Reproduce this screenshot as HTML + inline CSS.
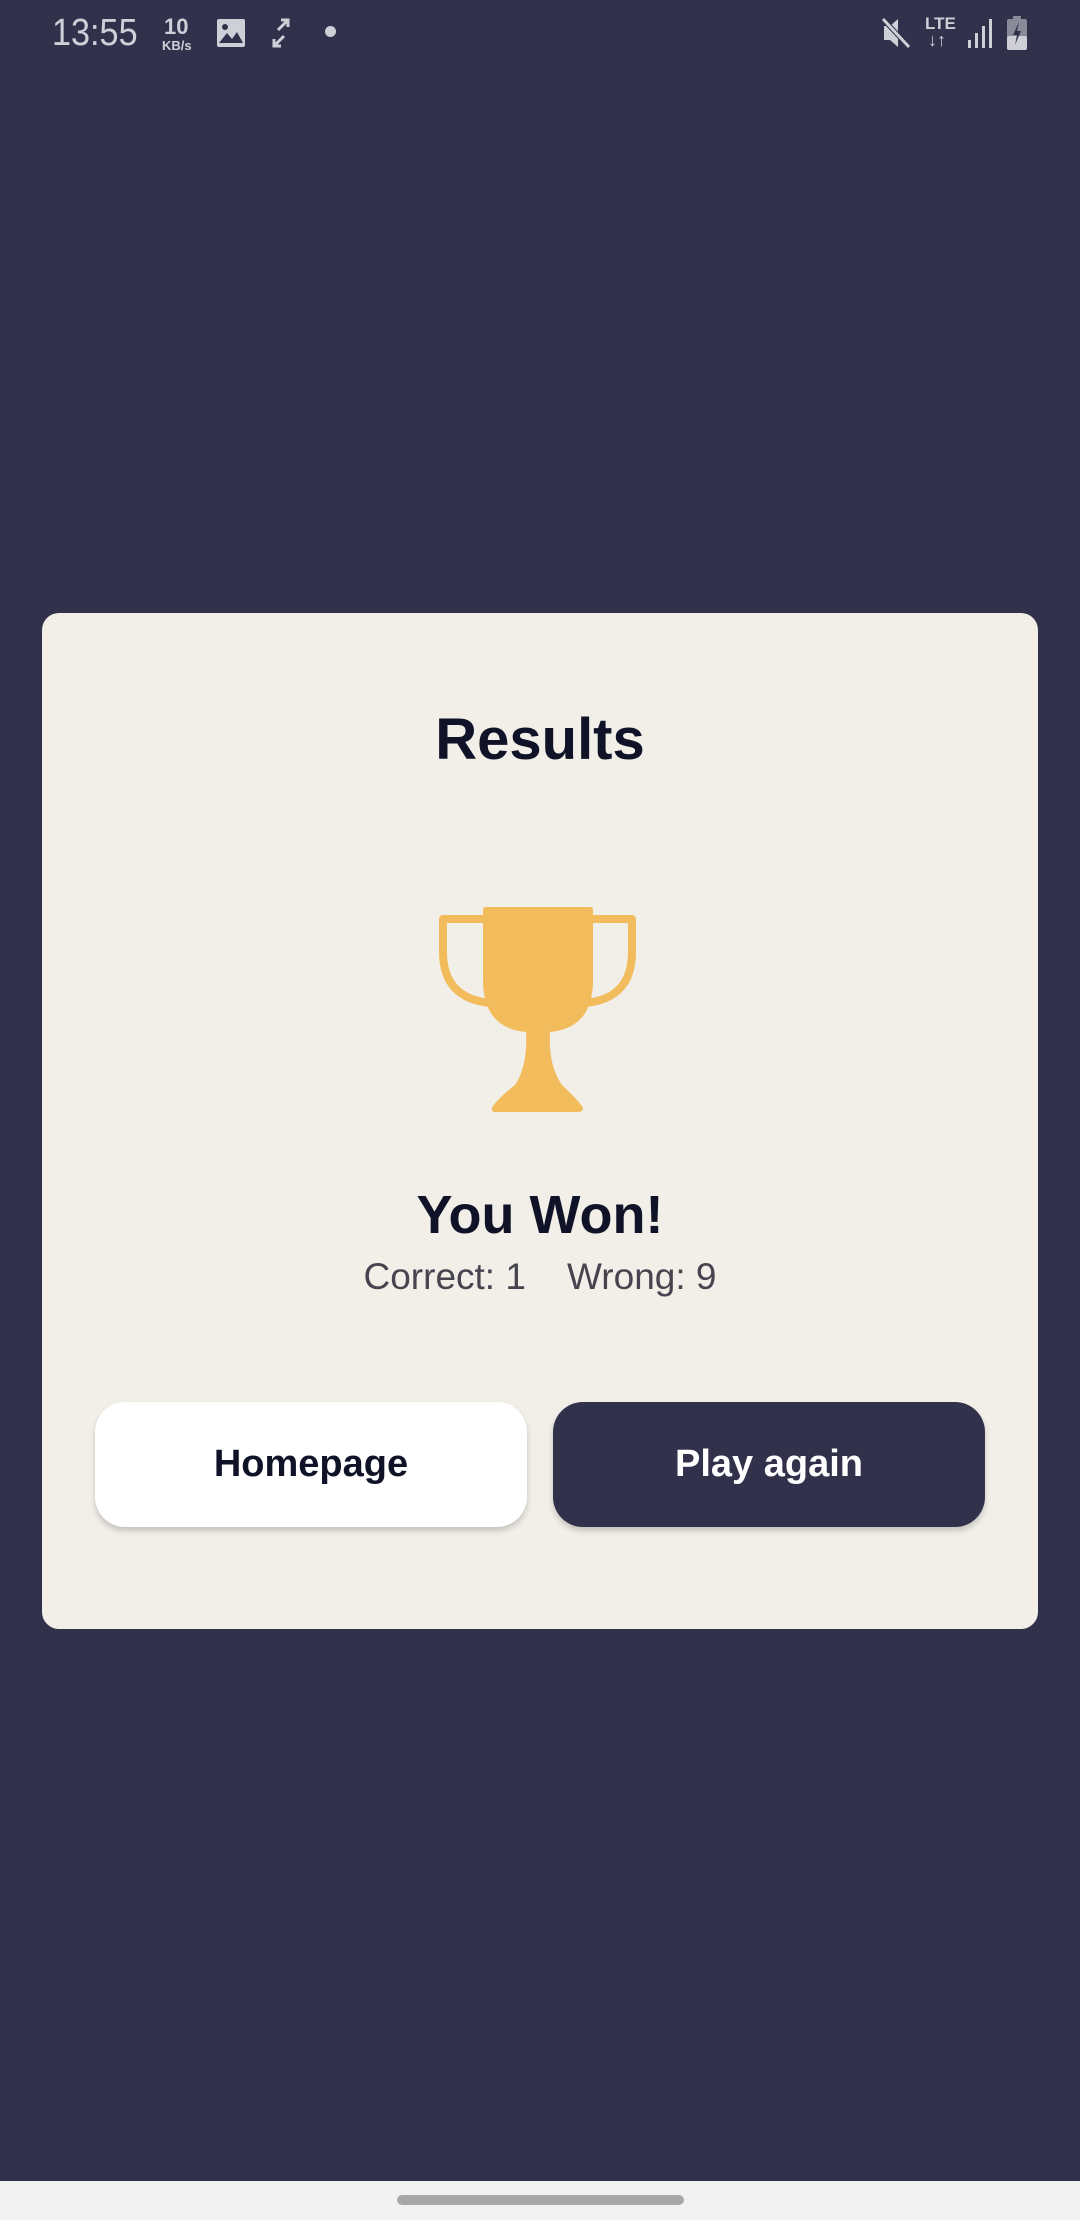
<!DOCTYPE html>
<html><head><meta charset="utf-8"><style>
*{margin:0;padding:0;box-sizing:border-box}
body{width:1080px;height:2220px;background:#32314c;position:relative;overflow:hidden;font-family:"Liberation Sans",sans-serif}
.sb{position:absolute;color:#cfcfd8}
.card{position:absolute;left:42px;top:613px;width:996px;height:1016px;background:#f2efe9;border-radius:17px}
.t{position:absolute;left:0;width:1080px;text-align:center;color:#101328;font-weight:bold}
.btn{position:absolute;top:1402px;height:125px;width:432px;border-radius:30px;display:flex;align-items:center;justify-content:center;font-weight:bold;font-size:38px;box-shadow:0 4px 6px rgba(0,0,0,.18)}
</style></head><body>
<div class="sb" style="left:52px;top:12px;font-size:38px;transform:scaleX(.9);transform-origin:left">13:55</div>
<div class="sb" style="left:164px;top:14px;font-size:22px;font-weight:bold">10</div>
<div class="sb" style="left:162px;top:38px;font-size:13px;font-weight:bold">KB/s</div>
<svg class="sb" style="left:216px;top:18px" width="30" height="30" viewBox="0 0 30 30"><rect x="1" y="1" width="28" height="28" rx="2" fill="#cfcfd8"/><circle cx="9" cy="9" r="3" fill="#32314c"/><path d="M3 25 L11 15 L16 21 L21 14 L27 25Z" fill="#32314c"/></svg>
<svg class="sb" style="left:272px;top:18px" width="18" height="30" viewBox="0 0 18 30"><path d="M9 2 L16 2 L16 9 M16 2 L6 12 M9 28 L2 28 L2 21 M2 28 L12 18" stroke="#cfcfd8" stroke-width="3" fill="none"/></svg>
<div class="sb" style="left:325px;top:26px;width:11px;height:11px;border-radius:50%;background:#cfcfd8"></div>
<svg class="sb" style="left:880px;top:16px" width="32" height="34" viewBox="0 0 32 34"><path d="M4 10 H10 L18 3 V31 L10 24 H4Z" fill="#cfcfd8"/><path d="M3 3 L29 31" stroke="#32314c" stroke-width="5"/><path d="M3 3 L29 31" stroke="#cfcfd8" stroke-width="3"/></svg>
<div class="sb" style="left:925px;top:14px;font-size:17px;font-weight:bold">LTE</div>
<div class="sb" style="left:928px;top:30px;font-size:18px;font-weight:bold">↓↑</div>
<svg class="sb" style="left:966px;top:18px" width="28" height="30" viewBox="0 0 28 30"><rect x="2" y="22" width="3" height="8" fill="#cfcfd8"/><rect x="9" y="15" width="3" height="15" fill="#cfcfd8"/><rect x="16" y="8" width="3" height="22" fill="#cfcfd8"/><rect x="23" y="1" width="3" height="29" fill="#cfcfd8"/></svg>
<svg class="sb" style="left:1006px;top:16px" width="22" height="34" viewBox="0 0 22 34"><rect x="7" y="0" width="8" height="4" fill="#8a8a99"/><rect x="1" y="3" width="20" height="31" rx="2" fill="#8a8a99"/><rect x="1" y="20" width="20" height="14" rx="2" fill="#cfcfd8"/><path d="M13 6 L7 19 H11 L9 29 L15 15 H11Z" fill="#32314c"/></svg>
<div class="card"></div>
<div class="t" style="top:706px;font-size:58px">Results</div>
<svg style="position:absolute;left:420px;top:880px" width="240" height="250" viewBox="0 0 240 250">
<path d="M63,30 Q63,27 66,27 L170,27 Q173,27 173,30 L173,100 Q173,148 130,152 Q128,185 142,205 Q160,222 163,228 Q163,232 158,232 L76,232 Q71,232 72,228 Q76,220 95,205 Q108,185 106,152 Q63,148 63,100 Z" fill="#f2bb5c"/>
<path d="M66,39 L23,39 L23,72 Q23,118 70,123 M170,39 L212,39 L212,72 Q212,118 166,123" stroke="#f2bb5c" stroke-width="8" fill="none" stroke-linejoin="round"/>
</svg>
<div class="t" style="top:1184px;font-size:54px">You Won!</div>
<div class="t" style="top:1256px;font-size:37px;font-weight:normal;color:#46444e">Correct: 1&nbsp;&nbsp;&nbsp;&nbsp;Wrong: 9</div>
<div class="btn" style="left:95px;background:#fff;color:#101328">Homepage</div>
<div class="btn" style="left:553px;background:#32314c;color:#fff">Play again</div>
<div style="position:absolute;left:0;top:2181px;width:1080px;height:39px;background:#f2f2f2"></div>
<div style="position:absolute;left:397px;top:2195px;width:287px;height:10px;border-radius:5px;background:#a8a8a8"></div>
</body></html>
